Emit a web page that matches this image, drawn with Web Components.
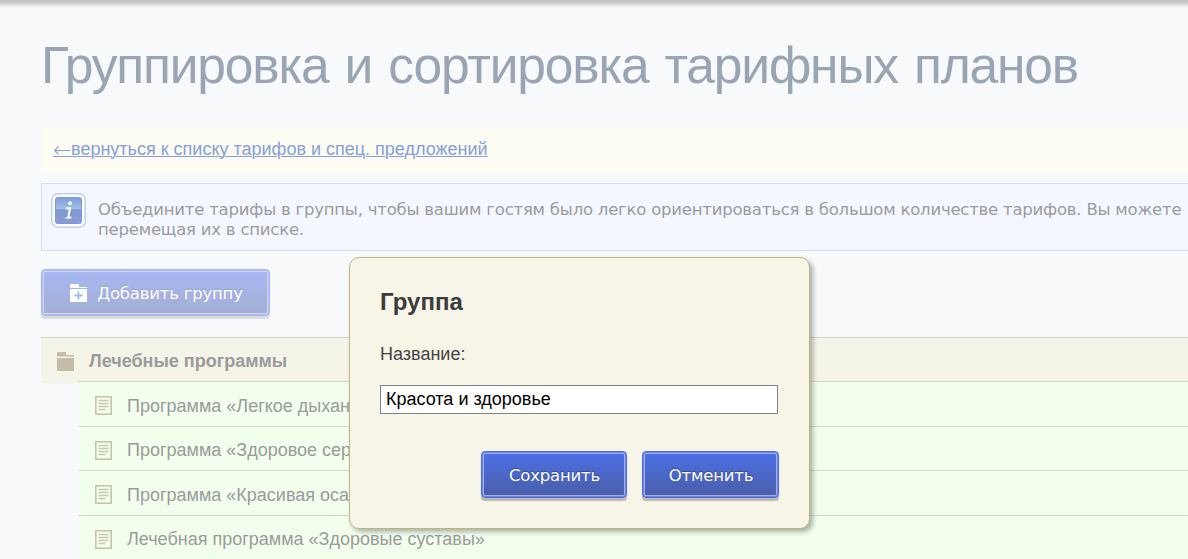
<!DOCTYPE html>
<html lang="ru">
<head>
<meta charset="utf-8">
<title>Группировка и сортировка тарифных планов</title>
<style>
html,body{margin:0;height:559px;overflow:hidden;background:#f8f9fb}
body{font-family:"Liberation Sans",Arial,sans-serif;font-size:18px;color:#9b9b9b}
</style>
</head>
<body>
<tariff-page></tariff-page>
<script>
const define=(name,html)=>customElements.define(name,class extends HTMLElement{
  constructor(){super();this.attachShadow({mode:'open'}).innerHTML=html;}
});

define('page-title',`<style>
:host{display:block;height:57px}
h1{margin:0;font:400 51.5px/56px "Liberation Sans",Arial,sans-serif;color:#9aa5b3;white-space:nowrap;letter-spacing:-1.17px;word-spacing:3px}
</style><h1><slot></slot></h1>`);

define('back-bar',`<style>
:host{display:block;height:46px;background:#fdfcf3;padding-left:12px;line-height:44px;white-space:nowrap}
a{color:#85a0d8;text-decoration:underline;text-decoration-thickness:1px;text-underline-offset:1px}
</style><a><slot></slot></a>`);

define('info-box',`<style>
:host{display:flex;box-sizing:border-box;height:68px;border:1px solid #d2ddf2;border-right:0;background:#f4f7ff;padding:9px 0 0 9px}
svg{flex:none;width:35px;height:35px;margin-right:12px}
p{margin:7px 0 0;font:16.5px/20px "DejaVu Sans",Verdana,sans-serif;letter-spacing:-.22px;color:#9b9b9b;white-space:nowrap}
</style>
<svg viewBox="0 0 35 35"><defs><linearGradient id="g" x2="0" y2="1"><stop offset="0" stop-color="#7f9cda"/><stop offset=".43" stop-color="#a3c0e8"/><stop offset=".47" stop-color="#8098d3"/><stop offset="1" stop-color="#8c9cd4"/></linearGradient></defs>
<rect x=".75" y=".75" width="33.5" height="33.5" rx="6" fill="#fff" stroke="#c3cfee" stroke-width="1.5"/>
<rect x="4.5" y="4.5" width="26" height="26" rx="2" fill="url(#g)" stroke="#7d98d6"/>
<circle cx="19" cy="10.3" r="2" fill="#f4f7ff"/><path d="M14.8 15.3h4.2l-1.6 8.6q-.1 1.2 2.8.3" fill="none" stroke="#f4f7ff" stroke-width="2.2"/><path d="M14.6 24.9h4" stroke="#f4f7ff" stroke-width="1.4"/></svg>
<p><slot></slot></p>`);

define('glossy-button',`<style>
:host{display:inline-block}
button{display:flex;align-items:center;justify-content:center;box-sizing:border-box;width:100%;height:47px;margin:0;padding:0 0 0 1px;border:1px solid #4a6ce0;border-radius:4px;background:linear-gradient(#4c70e8,#4a5da6);box-shadow:inset 0 0 0 1px #6d86e6,inset 0 0 0 2px #a3b1ea,0 3px 1px #b9b7b0;color:#fff;font:16.5px/20px "DejaVu Sans",Verdana,sans-serif;letter-spacing:-.2px;text-shadow:0 -1px 1px #34478c;white-space:nowrap}
span{padding-top:3px}
:host([faded]) button{border-color:#a3b4ef;background:linear-gradient(#a6b7f3,#a5afd3);box-shadow:inset 0 0 0 1px #b1bff2,inset 0 0 0 2px #cdd6f6,0 3px 1px #dcdcdc;text-shadow:0 -1px 1px #98a4cc;padding-left:2px}
</style><button><slot name="icon"></slot><span><slot></slot></span></button>`);

define('folder-plus-icon',`<style>:host{display:block;width:17px;height:18px;margin-right:10px}svg{display:block}</style>
<svg width="17" height="18"><path d="M0 0h9v3h8v1H0zM0 5h17v13H0z" fill="#fff"/><path d="M8.5 7.5v8M4.5 11.5h8" stroke="#a9b6e4" stroke-width="1.8"/></svg>`);

define('tariff-group',`<style>
:host{display:block}
header{display:flex;box-sizing:border-box;height:46px;border-top:1px solid #d4d2c8;background:#f5f4e9;padding-left:16px;font:bold 18px/46px "Liberation Sans",Arial,sans-serif}
svg{margin:14px 15px 0 0;flex:none}
div{margin:-2px 0 0 38px}
</style><header><svg width="17" height="19"><path d="M0 0h9v3h8v1H0zM0 6h17v13H0z" fill="#c5bca8"/><path d="M0 4h17v1H0z" fill="#dbd6c6"/></svg><slot name="name"></slot></header><div><slot></slot></div>`);

define('tariff-row',`<style>
:host{display:flex;box-sizing:border-box;height:44.5px;border-top:1px solid #d4d4c8;background:#f2ffed;padding-left:16px;line-height:48px;white-space:nowrap}
:host([tight]){line-height:46px}
svg{margin:14px 15px 0 0;flex:none}
</style><svg width="17" height="19" fill="none"><rect x=".8" y=".8" width="15.4" height="17.4" stroke="#c9c3ae" stroke-width="1.6"/><path d="M3.5 4.5h10M3.5 7.5h10M3.5 10.5h10M3.5 13.5h7" stroke="#cbc7b3" stroke-width="1.5"/></svg><slot></slot>`);

define('group-dialog',`<style>
:host{position:absolute;left:349px;top:257px;box-sizing:border-box;width:461px;height:272px;border:1px solid #bdb77c;border-radius:10px;background:#f7f4e8;box-shadow:3px 3px 5px rgba(0,0,0,.3);padding:29px 30px 0;color:#444}
h2{margin:0;font:bold 24px/30px "Liberation Sans",Arial,sans-serif;color:#3b3b3b}
label{display:block;margin:25px 0 19px;line-height:24px;color:#444}
input{display:block;box-sizing:border-box;width:398px;height:29px;border:1px solid #828282;border-radius:0;background:#fff;padding:0 5px;margin:0;font:18px "Liberation Sans",Arial,sans-serif;color:#000}
footer{display:flex;justify-content:flex-end;gap:15px;margin-top:37px}
.s{width:146px}.c{width:137px}
</style><h2>Группа</h2><label>Название:</label><input value="Красота и здоровье"><footer><glossy-button class="s">Сохранить</glossy-button><glossy-button class="c">Отменить</glossy-button></footer>`);

define('tariff-page',`<style>
:host{display:block;position:relative;box-sizing:border-box;height:559px;overflow:hidden;padding:37px 0 0 41px;background:linear-gradient(#c2c4c6 0,#c8cacc 3px,#e2e4e6 5px,#f4f5f7 7px,#f8f9fb 9px)}
back-bar{margin-top:33px}
info-box{margin-top:10px}
.add{display:block;width:229px;margin:18px 0 21px}
.arrow{font:200 21.5px/0 "DejaVu Sans",sans-serif;vertical-align:-2px}
</style>
<page-title>Группировка и сортировка тарифных планов</page-title>
<back-bar><span class="arrow">←</span>вернуться к списку тарифов и спец. предложений</back-bar>
<info-box>Объедините тарифы в группы, чтобы вашим гостям было легко ориентироваться в большом количестве тарифов. Вы можете<br>перемещая их в списке.</info-box>
<glossy-button class="add" faded><folder-plus-icon slot="icon"></folder-plus-icon>Добавить группу</glossy-button>
<tariff-group><span slot="name">Лечебные программы</span>
<tariff-row>Программа «Легкое дыхание»</tariff-row>
<tariff-row tight>Программа «Здоровое сердце»</tariff-row>
<tariff-row>Программа «Красивая осанка»</tariff-row>
<tariff-row tight>Лечебная программа «Здоровые суставы»</tariff-row>
</tariff-group>
<group-dialog></group-dialog>`);
</script>
</body>
</html>
